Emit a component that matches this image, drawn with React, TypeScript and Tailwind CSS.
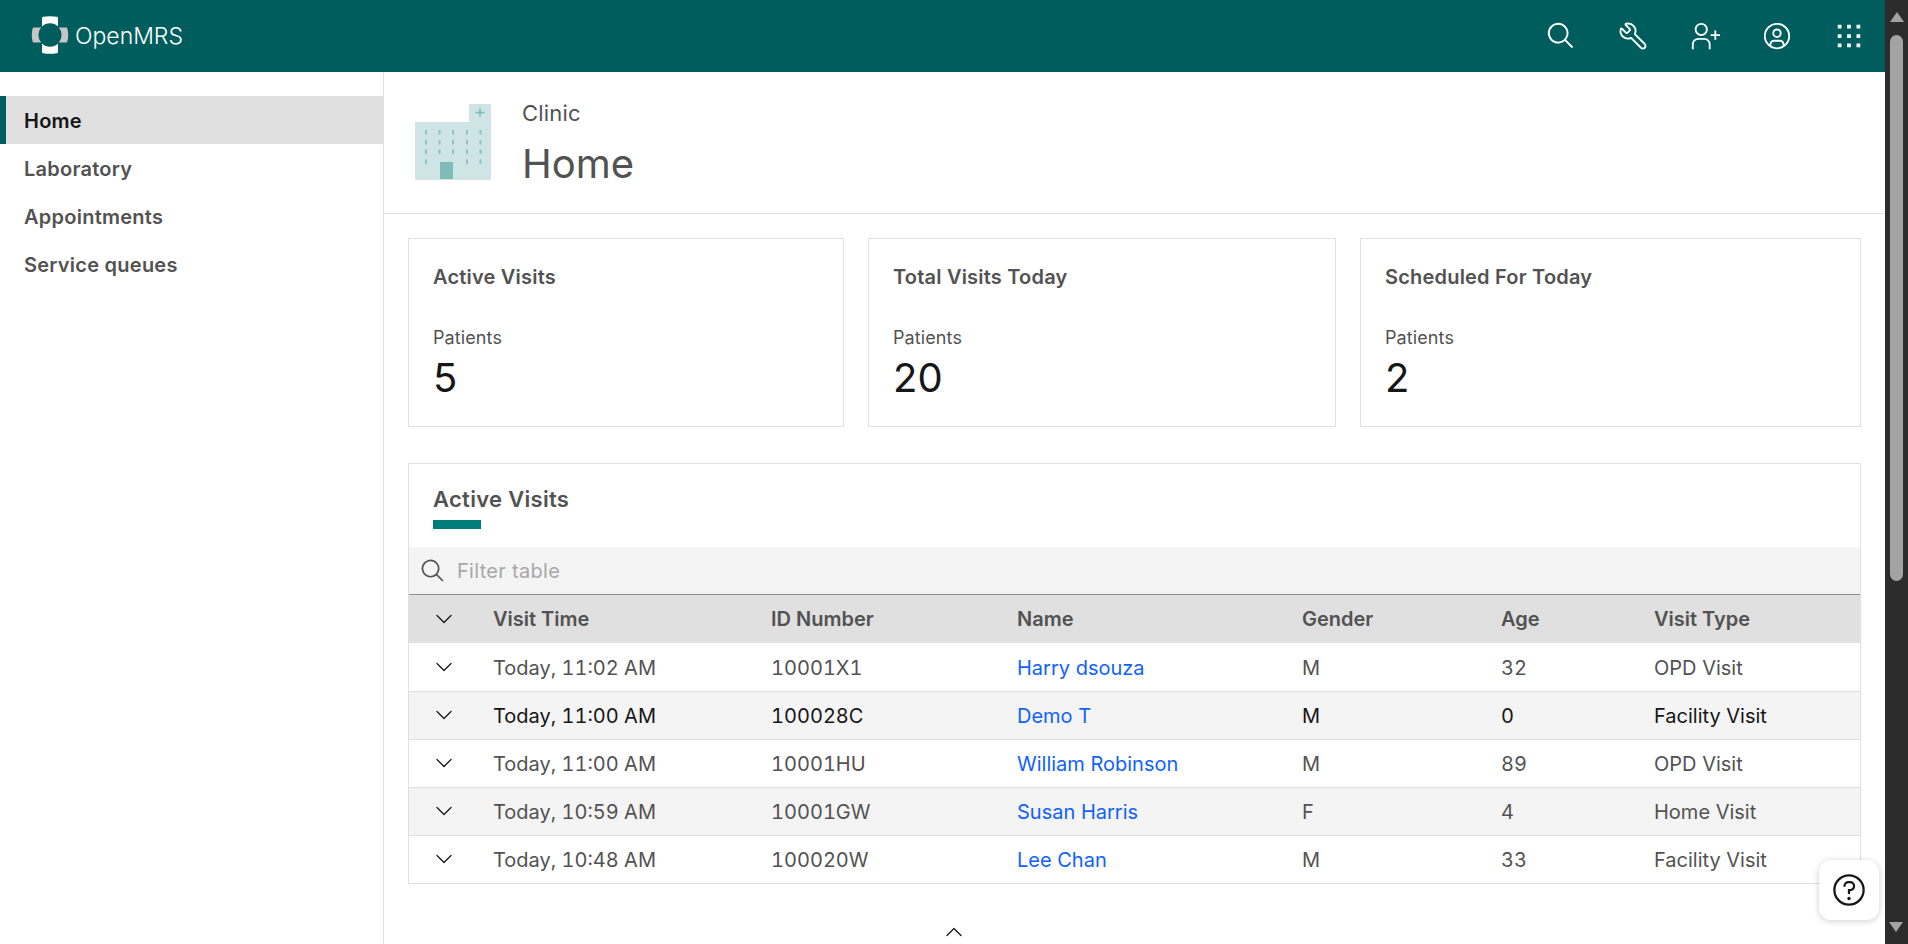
import { ChevronDown, ChevronUp, Wrench } from "lucide-react";

const font = { fontFamily: 'Inter, "Noto Sans", sans-serif' };

const navItems = ["Home", "Laboratory", "Appointments", "Service queues"];

const stats = [
  { title: "Active Visits", value: "5" },
  { title: "Total Visits Today", value: "20" },
  { title: "Scheduled For Today", value: "2" },
];

const visits = [
  { time: "Today, 11:02 AM", id: "10001X1", name: "Harry dsouza", gender: "M", age: "32", type: "OPD Visit" },
  { time: "Today, 11:00 AM", id: "100028C", name: "Demo T", gender: "M", age: "0", type: "Facility Visit" },
  { time: "Today, 11:00 AM", id: "10001HU", name: "William Robinson", gender: "M", age: "89", type: "OPD Visit" },
  { time: "Today, 10:59 AM", id: "10001GW", name: "Susan Harris", gender: "F", age: "4", type: "Home Visit" },
  { time: "Today, 10:48 AM", id: "100020W", name: "Lee Chan", gender: "M", age: "33", type: "Facility Visit" },
];

const SearchIcon = ({ className }: { className: string }) => (
  <svg viewBox="0 0 32 32" fill="currentColor" className={className}>
    <path d="M29 27.586l-7.552-7.552a11.018 11.018 0 1 0-1.414 1.414L27.586 29zM4 13a9 9 0 1 1 9 9 9.01 9.01 0 0 1-9-9z" />
  </svg>
);

const Logo = () => (
  <svg viewBox="0 0 38 38" className="mb-[2px] h-[38px] w-[38px]">
    <path d="M11 2 Q11 1 12 0.8 Q19 -0.4 26 0.8 Q27 1 27 2 V10.5 A11.5 11.5 0 0 0 11 10.5 Z" fill="#fff" />
    <path d="M11 36 Q11 37 12 37.2 Q19 38.4 26 37.2 Q27 37 27 36 V27.5 A11.5 11.5 0 0 1 11 27.5 Z" fill="#fff" />
    <path d="M2 11.5 Q-0.5 19 2 26.5 H10.2 A11.5 11.5 0 0 1 10.2 11.5 Z" fill="#c6c6c6" />
    <path d="M36 11.5 Q38.5 19 36 26.5 H27.8 A11.5 11.5 0 0 0 27.8 11.5 Z" fill="#c6c6c6" />
  </svg>
);

const Building = () => (
  <svg viewBox="0 0 76 76" className="mb-[2px] h-[76px] w-[76px]">
    <path d="M0 18 H54 V1 Q54 0 55 0 H75 Q76 0 76 1 V75 Q76 76 75 76 H1 Q0 76 0 75 Z" fill="#cfe5e5" />
    <path d="M65 4 V13 M60.5 8.5 H69.5" stroke="#7fbbb8" strokeWidth="1.5" />
    {[10, 23.5, 37, 51, 64.5].map((x) =>
      [26, 36, 45.5, 55.5].map((y) =>
        y === 55.5 && (x === 23.5 || x === 37) ? null : (
          <rect key={`${x}-${y}`} x={x} y={y} width="2" height="4.5" fill="#8cc5c1" />
        ),
      ),
    )}
    <rect x="25" y="58" width="13" height="17" fill="#7fbbb8" />
  </svg>
);

export default function App() {
  return (
    <div className="flex h-screen overflow-hidden bg-white" style={font}>
      <div className="flex min-w-0 flex-1 flex-col">
        <header className="flex h-[72px] shrink-0 items-center justify-between bg-[#005d5d] pl-[31px] text-white">
          <div className="flex items-center gap-[6px]">
            <Logo />
            <span className="text-[23px] font-light leading-none">OpenMRS</span>
          </div>
          <div className="flex items-center">
            <button className="flex h-[72px] w-[72px] items-center justify-center">
              <SearchIcon className="h-[30px] w-[30px]" />
            </button>
            <button className="flex h-[72px] w-[72px] items-center justify-center">
              <Wrench className="h-[30px] w-[30px] -scale-x-100" strokeWidth={1.5} />
            </button>
            <button className="flex h-[72px] w-[72px] items-center justify-center">
              <svg viewBox="0 0 32 32" fill="currentColor" className="h-[30px] w-[30px]">
                <path d="M32 14h-4v-4h-2v4h-4v2h4v4h2v-4h4zM12 4a5 5 0 1 1-5 5 5 5 0 0 1 5-5m0-2a7 7 0 1 0 7 7 7 7 0 0 0-7-7zM22 30h-2v-5a5 5 0 0 0-5-5H9a5 5 0 0 0-5 5v5H2v-5a7 7 0 0 1 7-7h6a7 7 0 0 1 7 7z" />
              </svg>
            </button>
            <button className="flex h-[72px] w-[72px] items-center justify-center">
              <svg viewBox="0 0 32 32" fill="currentColor" className="h-[30px] w-[30px]">
                <path d="M16 8a5 5 0 1 0 5 5 5 5 0 0 0-5-5zm0 8a3 3 0 1 1 3-3 3 3 0 0 1-3 3z" />
                <path d="M16 2a14 14 0 1 0 14 14A14 14 0 0 0 16 2zm-6 24.38V25a3 3 0 0 1 3-3h6a3 3 0 0 1 3 3v1.38a11.89 11.89 0 0 1-12 0zm13.99-1.45A5 5 0 0 0 19 20h-6a5 5 0 0 0-4.99 4.93 12 12 0 1 1 15.98 0z" />
              </svg>
            </button>
            <button className="flex h-[72px] w-[72px] items-center justify-center">
              <svg viewBox="0 0 32 32" fill="currentColor" className="h-[30px] w-[30px]">
                <path d="M4 4h4v4H4zM14 4h4v4h-4zM24 4h4v4h-4zM4 14h4v4H4zM14 14h4v4h-4zM24 14h4v4h-4zM4 24h4v4H4zM14 24h4v4h-4zM24 24h4v4h-4z" />
              </svg>
            </button>
          </div>
        </header>

        <div className="flex min-h-0 flex-1">
          <nav className="w-[384px] shrink-0 border-r border-[#e0e0e0] pt-6">
            {navItems.map((item, i) => (
              <div
                key={item}
                className={
                  i === 0
                    ? "flex h-12 items-center border-l-[6px] border-[#005d5d] bg-[#e0e0e0] pl-[18px] pt-[2px] text-[20px] font-semibold tracking-[0.25px] text-[#161616]"
                    : "flex h-12 items-center pl-6 pt-[2px] text-[20px] font-semibold tracking-[0.25px] text-[#525252]"
                }
              >
                {item}
              </div>
            ))}
          </nav>

          <main className="relative min-w-0 flex-1">
            <div className="flex h-[142px] items-center border-b border-[#e0e0e0] pl-[31px]">
              <Building />
              <div className="ml-[31px]">
                <div className="text-[22px] leading-7 tracking-[0.2px] text-[#525252]">Clinic</div>
                <div className="mt-[14px] text-[40px] leading-[46px] text-[#525252]">Home</div>
              </div>
            </div>

            <div className="px-6 pt-6">
              <div className="grid grid-cols-[436px_468px_1fr] gap-6">
                {stats.map((s) => (
                  <div key={s.title} className="h-[189px] border border-[#e0e0e0] px-6 pt-[24px]">
                    <div className="text-[20px] font-semibold leading-7 tracking-[0.2px] text-[#525252]">{s.title}</div>
                    <div className="mt-[35px] text-[18px] leading-6 tracking-[0.1px] text-[#525252]">Patients</div>
                    <div className="mt-[3px] text-[40px] leading-[50px] text-[#161616]">{s.value}</div>
                  </div>
                ))}
              </div>

              <div className="mt-[36px] border border-[#e0e0e0]">
                <div className="h-[83px] px-6 pt-[21px]">
                  <div className="text-[22px] font-semibold leading-7 tracking-[0.3px] text-[#525252]">Active Visits</div>
                  <div className="mt-[7px] h-[9px] w-12 bg-[#007d79]" />
                </div>
                <div className="flex h-12 items-center gap-[11px] border-b border-[#8d8d8d] bg-[#f4f4f4] pl-[11px]">
                  <SearchIcon className="h-[26px] w-[26px] text-[#525252]" />
                  <span className="text-[20px] tracking-[0.3px] text-[#a8a8a8]">Filter table</span>
                </div>
                <table className="w-full table-fixed border-collapse text-[20px]">
                  <colgroup>
                    <col className="w-[68px]" />
                    <col className="w-[278px]" />
                    <col className="w-[246px]" />
                    <col className="w-[285px]" />
                    <col className="w-[199px]" />
                    <col className="w-[153px]" />
                    <col />
                  </colgroup>
                  <thead>
                    <tr className="h-12 bg-[#e0e0e0] text-left font-semibold text-[#525252]">
                      <th className="pl-[2px] text-center font-semibold">
                        <ChevronDown className="mx-auto h-[28px] w-[28px] text-[#161616]" strokeWidth={1.1} />
                      </th>
                      <th className="pl-4 font-semibold">Visit Time</th>
                      <th className="pl-4 font-semibold">ID Number</th>
                      <th className="pl-4 font-semibold">Name</th>
                      <th className="pl-4 font-semibold">Gender</th>
                      <th className="pl-4 font-semibold">Age</th>
                      <th className="pl-4 font-semibold">Visit Type</th>
                    </tr>
                  </thead>
                  <tbody>
                    {visits.map((v, i) => (
                      <tr
                        key={v.id}
                        className={
                          (i % 2 === 1 ? "bg-[#f4f4f4] " : "bg-white ") +
                          (i === 1 ? "text-[#161616] " : "text-[#525252] ") +
                          "h-12 border-b border-[#e0e0e0] last:border-b-0"
                        }
                      >
                        <td className="pl-[2px]">
                          <ChevronDown className="mx-auto h-[28px] w-[28px] text-[#161616]" strokeWidth={1.1} />
                        </td>
                        <td className="pl-4 pt-[2px] tabular-nums">{v.time}</td>
                        <td className="pl-4 pt-[2px] tabular-nums">{v.id}</td>
                        <td className="pl-4 pt-[2px] text-[#0f62fe]">{v.name}</td>
                        <td className="pl-4 pt-[2px]">{v.gender}</td>
                        <td className="pl-4 pt-[2px] tabular-nums">{v.age}</td>
                        <td className="pl-4 pt-[2px]">{v.type}</td>
                      </tr>
                    ))}
                  </tbody>
                </table>
              </div>

              <div className="ml-[532px] mt-[34px]">
                <ChevronUp className="h-[28px] w-[28px] text-[#161616]" strokeWidth={1.1} />
              </div>
            </div>

            <button className="absolute bottom-[24px] right-[6px] flex h-[60px] w-[60px] items-center justify-center rounded-xl bg-white shadow-[0_1px_6px_rgba(0,0,0,0.2)]">
              <svg viewBox="0 0 32 32" fill="#161616" className="h-9 w-9">
                <path d="M16 2a14 14 0 1 0 14 14A14 14 0 0 0 16 2zm0 26a12 12 0 1 1 12-12 12 12 0 0 1-12 12z" />
                <circle cx="16" cy="23.5" r="1.5" />
                <path d="M17 8h-1.5a4.49 4.49 0 0 0-4.5 4.5v.5h2v-.5a2.5 2.5 0 0 1 2.5-2.5H17a2.5 2.5 0 0 1 0 5h-2v4.5h2V17a4.5 4.5 0 0 0 0-9z" />
              </svg>
            </button>
          </main>
        </div>
      </div>

      <div className="relative w-[23px] shrink-0 bg-[#2c2c2c]">
        <div className="mx-auto mt-[12px] h-0 w-0 border-x-[7px] border-b-[10px] border-x-transparent border-b-[#a3a3a3]" />
        <div className="mx-auto mt-[13px] h-[546px] w-[13px] rounded-t-[7px] rounded-b-[7px] bg-[#a3a3a3]" />
        <div className="absolute bottom-[12px] left-[4px] h-0 w-0 border-x-[7px] border-t-[10px] border-x-transparent border-t-[#a3a3a3]" />
      </div>
    </div>
  );
}
